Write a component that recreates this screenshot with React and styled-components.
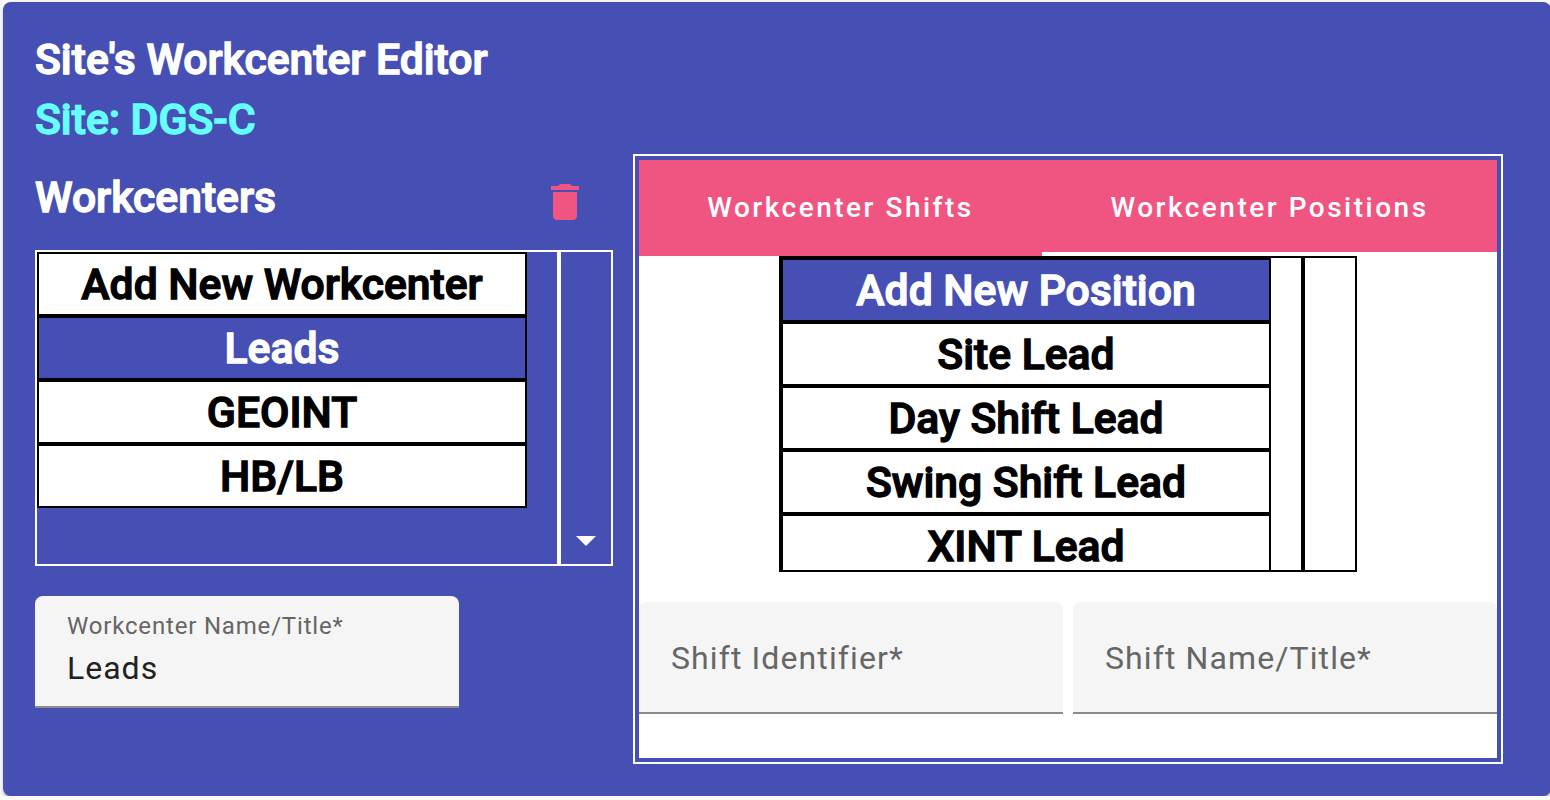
import React from 'react';
import styled, { createGlobalStyle } from 'styled-components';

const indigo = '#4650b4';
const pink = '#f05582';

const GlobalStyle = createGlobalStyle`
  * { box-sizing: border-box; }
  body {
    margin: 0;
    background: #fafafa;
    font-family: Roboto, "Liberation Sans", sans-serif;
    overflow: hidden;
  }
`;

const Page = styled.div`
  height: 796px;
  padding: 2px 0 0 3px;
  overflow: hidden;
`;

const Card = styled.main`
  width: 1548px;
  height: 794px;
  padding: 28px 32px 0;
  border-radius: 8px;
  background: ${indigo};
  color: #fff;
  box-shadow: 0 4px 2px -2px rgba(0, 0, 0, 0.2), 0 2px 2px rgba(0, 0, 0, 0.14),
    0 2px 6px rgba(0, 0, 0, 0.12);
`;

const Heading = styled.h1`
  height: 60px;
  margin: 0;
  font-size: 42.67px;
  line-height: 58px;
  font-weight: 500;
  -webkit-text-stroke: 1.33px currentColor;
  color: ${(p) => p.$color || '#fff'};
`;

const Columns = styled.div`
  display: flex;
  gap: 20px;
  margin-top: 4px;
`;

const Left = styled.section`
  width: 578px;
  padding-top: 14px;
`;

const SectionHead = styled.div`
  display: flex;
  justify-content: space-between;
  align-items: flex-start;
  height: 82px;
  padding-right: 24px;
`;

const IconButton = styled.button`
  display: flex;
  margin: 10px 0 0;
  padding: 0;
  border: 0;
  background: none;
  color: ${pink};
`;

const Picker = styled.div`
  display: flex;
  width: 578px;
  height: 316px;
  color: ${(p) => p.$line};
`;

const PickerList = styled.ul`
  width: 524px;
  margin: 0;
  padding: 0;
  border: 2px solid currentColor;
  overflow: hidden;
  list-style: none;
`;

const PickerSide = styled.div`
  display: flex;
  justify-content: center;
  align-items: flex-end;
  width: 54px;
  border: 2px solid currentColor;
`;

const Option = styled.li`
  width: 490px;
  height: 64px;
  border: 2px solid #000;
  background: ${(p) => (p.$selected ? indigo : '#fff')};
  color: ${(p) => (p.$selected ? '#fff' : '#000')};
  font-size: 42.67px;
  line-height: 60px;
  font-weight: 500;
  -webkit-text-stroke: 1.33px currentColor;
  text-align: center;
  white-space: nowrap;
`;

const Field = styled.label`
  display: flex;
  flex-direction: column;
  justify-content: ${(p) => (p.$filled ? 'flex-start' : 'center')};
  width: 424px;
  height: 112px;
  padding: ${(p) => (p.$filled ? '14px 32px 0' : '2px 32px 0')};
  border-bottom: 2px solid #8b8b8b;
  border-radius: 8px 8px 0 0;
  background: #f5f5f5;
  white-space: nowrap;
`;

const FieldLabel = styled.span`
  color: #666;
  font-size: ${(p) => (p.$floating ? 24 : 32)}px;
  line-height: ${(p) => (p.$floating ? 32 : 40)}px;
  letter-spacing: ${(p) => (p.$floating ? 0.82 : 1.1)}px;
`;

const FieldInput = styled.input`
  width: 100%;
  height: 48px;
  margin: 2px 0 0;
  padding: 0;
  border: 0;
  outline: 0;
  background: none;
  color: #212121;
  font: 400 32px/48px Roboto, "Liberation Sans", sans-serif;
  letter-spacing: 1px;
`;

const LeftField = styled.div`
  margin-top: 30px;
`;

const TabPanel = styled.section`
  width: 870px;
  height: 610px;
  padding: 4px;
  border: 2px solid #fff;
`;

const TabBody = styled.div`
  height: 598px;
  background: #fff;
`;

const TabHeader = styled.div`
  display: flex;
  height: 96px;
`;

const Tab = styled.button`
  width: ${(p) => p.$width}px;
  height: 96px;
  padding: 4px 0 0;
  border: 0;
  border-bottom: 4px solid ${(p) => (p.$active ? '#fff' : pink)};
  background: ${pink};
  color: #fff;
  font: 500 28px/40px Roboto, "Liberation Sans", sans-serif;
  letter-spacing: 2.5px;
`;

const PickerWrap = styled.div`
  display: flex;
  justify-content: center;
`;

const FieldRow = styled.div`
  display: flex;
  gap: 10px;
  margin-top: 30px;
`;

const TrashIcon = () => (
  <svg width="48" height="48" viewBox="0 0 24 24" fill="currentColor">
    <path d="M6 19c0 1.1.9 2 2 2h8c1.1 0 2-.9 2-2V7H6v12zM19 4h-3.5l-1-1h-5l-1 1H5v2h14V4z" />
  </svg>
);

const ArrowDownIcon = () => (
  <svg width="48" height="48" viewBox="0 0 24 24" fill="currentColor">
    <path d="M7 10l5 5 5-5z" />
  </svg>
);

const workcenters = ['Add New Workcenter', 'Leads', 'GEOINT', 'HB/LB'];
const positions = ['Add New Position', 'Site Lead', 'Day Shift Lead', 'Swing Shift Lead', 'XINT Lead'];

function OptionPicker({ items, selected, line, children }) {
  return (
    <Picker $line={line}>
      <PickerList>
        {items.map((item) => (
          <Option key={item} $selected={item === selected}>{item}</Option>
        ))}
      </PickerList>
      <PickerSide>{children}</PickerSide>
    </Picker>
  );
}

export default function App() {
  return (
    <Page>
      <GlobalStyle />
      <Card>
        <Heading>Site's Workcenter Editor</Heading>
        <Heading as="h2" $color="#66ffff">Site: DGS-C</Heading>
        <Columns>
          <Left>
            <SectionHead>
              <Heading as="h2">Workcenters</Heading>
              <IconButton aria-label="Delete workcenter"><TrashIcon /></IconButton>
            </SectionHead>
            <OptionPicker items={workcenters} selected="Leads" line="#fff">
              <ArrowDownIcon />
            </OptionPicker>
            <LeftField>
              <Field $filled>
                <FieldLabel $floating>Workcenter Name/Title*</FieldLabel>
                <FieldInput defaultValue="Leads" />
              </Field>
            </LeftField>
          </Left>
          <TabPanel>
            <TabBody>
              <TabHeader>
                <Tab $width={403}>Workcenter Shifts</Tab>
                <Tab $width={455} $active>Workcenter Positions</Tab>
              </TabHeader>
              <PickerWrap>
                <OptionPicker items={positions} selected="Add New Position" line="#000" />
              </PickerWrap>
              <FieldRow>
                <Field><FieldLabel>Shift Identifier*</FieldLabel></Field>
                <Field><FieldLabel>Shift Name/Title*</FieldLabel></Field>
              </FieldRow>
            </TabBody>
          </TabPanel>
        </Columns>
      </Card>
    </Page>
  );
}
